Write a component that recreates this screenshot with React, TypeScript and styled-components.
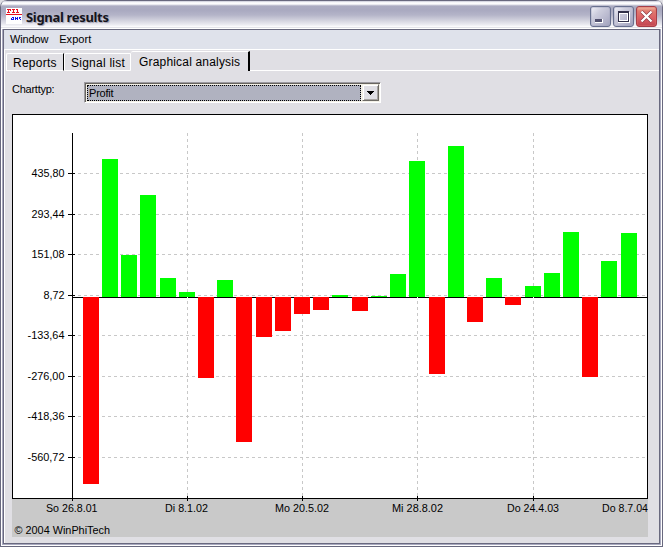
import React from "react";
import styled, { createGlobalStyle } from "styled-components";

const GlobalStyle = createGlobalStyle`
  * { box-sizing: border-box; }
  body { margin: 0; background: #e0dfe4; font-family: "Liberation Sans", Arial, sans-serif; color: #000; }
`;

const Frame = styled.div`
  width: 663px;
  height: 547px;
  display: flex;
  flex-direction: column;
  overflow: hidden;
  background: #e0dfe4;
  border: 1px solid #69697f;
  border-top: 0;
  border-radius: 7px 7px 0 0;
`;

const TitleBar = styled.header`
  height: 29px;
  flex: none;
  display: flex;
  align-items: flex-start;
  padding: 0 5px 0 5px;
  border-radius: 6px 6px 0 0;
  background: linear-gradient(
    #68687e 0, #68687e 1px, #b9bacb 1px, #f4f4f8 2px, #ffffff 4px, #d3d3df 5px,
    #acacc2 6px, #a9a9c0 10px, #b4b4c8 15px, #d0d0dc 20px, #ededf3 25px, #ffffff 27px, #c9c9d5 28px, #9999ac 29px
  );
`;

const AppIcon = styled.svg`
  width: 16px;
  height: 16px;
  margin-top: 8px;
`;

const Title = styled.h1`
  flex: 1;
  margin: 8px 0 0 4px;
  font: bold 13px/18px "Noto Sans", "Open Sans", sans-serif;
  letter-spacing: -0.32px;
  color: #14141c;
  text-shadow: 1px 1px 1px #9c9cb0;
`;

const Controls = styled.div`
  display: flex;
  gap: 2px;
  margin-top: 6px;
`;

const ControlButton = styled.button<{ $close?: boolean }>`
  width: 21px;
  height: 21px;
  padding: 0;
  border: 1px solid ${(p) => (p.$close ? "#a53e48" : "#68708f")};
  border-radius: 3px;
  background: ${(p) =>
    p.$close
      ? "linear-gradient(#f0b8a0 0, #df7b70 4px, #dc5f63 11px, #bf4652 19px)"
      : "linear-gradient(135deg, #f1f1f8 0, #cdcddd 9px, #b8b8ce 18px, #9fa0bb 27px)"};
  box-shadow: inset 0 0 0 1px ${(p) => (p.$close ? "#e0706870" : "#a4a6c070")};
  svg { display: block; width: 19px; height: 19px; }
`;

const Client = styled.div`
  flex: 1;
  display: flex;
  flex-direction: column;
  margin: 0 1px 1px;
  border: 1px solid #a9a9bf;
  border-width: 0 1px 1px;
  outline: 1px solid #fff;
`;

const Inner = styled.main`
  flex: 1;
  display: flex;
  flex-direction: column;
  border: 1px solid #69697f;
  box-shadow: inset 1px 0 #fff;
`;

const MenuBar = styled.nav`
  height: 20px;
  flex: none;
  display: flex;
  gap: 11px;
  padding: 3px 0 0 6px;
  background: #dfe2eb;
  border-bottom: 1px solid #fff;
  font-size: 11px;
  line-height: 13px;
`;

const MenuItem = styled.span<{ $spacing: number }>`
  letter-spacing: ${(p) => p.$spacing}px;
`;

const Tabs = styled.div`
  height: 21px;
  flex: none;
  display: flex;
  align-items: flex-end;
  padding-left: 2px;
`;

const Tab = styled.div<{ $width: number; $active?: boolean; $edge: string; $spacing: number }>`
  width: ${(p) => p.$width}px;
  height: ${(p) => (p.$active ? 20 : 18)}px;
  padding: ${(p) => (p.$active ? "3px 0 0 8px" : "2px 0 0 6px")};
  border-top: 1px solid #fff;
  border-bottom: ${(p) => (p.$active ? 0 : 1)}px solid #fff;
  border-left: ${(p) => (p.$active ? 0 : 1)}px solid #fff;
  border-right: ${(p) => p.$edge};
  border-radius: 2px 0 0 0;
  font-size: 12px;
  line-height: 15px;
  letter-spacing: ${(p) => p.$spacing}px;
  white-space: nowrap;
`;

const TabFill = styled.div`
  flex: 1;
  height: 1px;
  background: #fff;
`;

const Field = styled.div`
  height: 43px;
  flex: none;
  display: flex;
  padding: 11px 0 0 8px;
`;

const FieldLabel = styled.label`
  width: 72px;
  font-size: 11px;
  line-height: 14px;
  letter-spacing: -0.25px;
`;

const Combo = styled.div`
  width: 297px;
  height: 21px;
  display: flex;
  padding: 1px 0 0 1px;
  border: 1px solid #9c9aa0;
  border-right-color: #fff;
  border-bottom-color: #fff;
  background: #f4f1e8;
  box-shadow: inset 1px 1px #696660;
`;

const ComboValue = styled.div`
  flex: 1;
  height: 16px;
  margin: 1px 1px 0 1px;
  padding-left: 1px;
  border: 1px dotted #000;
  background: #b0b2c0;
  font-size: 11px;
  line-height: 15px;
  letter-spacing: -0.2px;
`;

const ComboButton = styled.div`
  width: 17px;
  height: 17px;
  margin-right: 1px;
  border: 1px solid;
  border-color: #f1eee4 #6e6b65 #6e6b65 #f1eee4;
  background: #e0dfe4;
  box-shadow: inset 1px 1px #fff, inset -1px -1px #a6a3a0;
  svg { display: block; width: 15px; height: 15px; }
`;

const ChartBox = styled.svg`
  display: block;
  width: 636px;
  height: 423px;
  margin-left: 8px;
  font-family: "Liberation Sans", Arial, sans-serif;
  font-size: 10px;
`;

const BASE = 297;
const bars: [number, number][] = [
  [83, 484], [102, 159], [121, 255], [140, 195], [160, 278], [179, 292], [198, 378], [217, 280],
  [236, 442], [256, 337], [275, 331], [294, 314], [313, 310], [332, 295], [352, 311], [371, 296],
  [390, 274], [409, 161], [429, 374], [448, 146], [467, 322], [486, 278], [505, 305], [525, 286],
  [544, 273], [563, 232], [582, 377], [601, 261], [621, 233],
];

const yTicks: [number, string, number][] = [
  [173, "435,80", 32], [214, "293,44", 32], [254, "151,08", 32], [295, "8,72", 44],
  [335, "-133,64", 28], [376, "-276,00", 28], [416, "-418,36", 28], [457, "-560,72", 28],
];

const xLabels: [number, string, number][] = [
  [46, "So 26.8.01", 51.5], [165, "Di 8.1.02", 43], [275, "Mo 20.5.02", 54],
  [392, "Mi 28.8.02", 51], [507, "Do 24.4.03", 52], [602, "Do 8.7.04", 46],
];

const xTicks = [187, 302, 417, 533];

function Chart() {
  return (
    <ChartBox viewBox="12 114 636 423" shapeRendering="crispEdges">
      <rect x={12} y={114} width={636} height={423} fill="#c9c9c9" />
      <rect x={12} y={114} width={636} height={385} fill="#000" />
      <rect x={13} y={115} width={634} height={383} fill="#fff" />
      {yTicks.map(([y]) => (
        <line key={y} x1={72} x2={645} y1={y + 0.5} y2={y + 0.5} stroke="#c8c8c8" strokeDasharray="3 3" />
      ))}
      {xTicks.map((x) => (
        <line key={x} x1={x + 0.5} x2={x + 0.5} y1={133} y2={498} stroke="#c8c8c8" strokeDasharray="3 3" />
      ))}
      <rect x={72} y={BASE} width={575} height={1} fill="#000" />
      {bars.map(([x, y]) =>
        y < BASE ? (
          <rect key={x} x={x} y={y} width={16} height={BASE - y} fill="#0f0" />
        ) : (
          <rect key={x} x={x} y={BASE} width={16} height={y - BASE} fill="#f00" />
        )
      )}
      {[187, 417, 533].map((x) => (
        <rect key={x} x={x} y={BASE} width={1} height={1} fill="#fff" />
      ))}
      <rect x={72} y={133} width={1} height={368} fill="#000" />
      {yTicks.map(([y, label, x]) => (
        <g key={label}>
          <rect x={68} y={y} width={7} height={1} fill="#000" />
          <text x={x - 0.5} y={y + 4} textLength={65 - x} lengthAdjust="spacingAndGlyphs">{label}</text>
        </g>
      ))}
      {xTicks.map((x) => (
        <rect key={x} x={x} y={496} width={1} height={5} fill="#000" />
      ))}
      {xLabels.map(([x, label, w]) => (
        <text key={label} x={x} y={512} textLength={w} lengthAdjust="spacingAndGlyphs">{label}</text>
      ))}
      <text x={14.5} y={534} textLength={95.5} lengthAdjust="spacingAndGlyphs">© 2004 WinPhiTech</text>
    </ChartBox>
  );
}

export default function App() {
  return (
    <>
      <GlobalStyle />
      <Frame>
        <TitleBar>
          <AppIcon viewBox="0 0 16 16" shapeRendering="crispEdges">
            <path d="M0 0h16v16H0z" fill="#fff" />
            <path d="M0 6h16v1H0zM1 1h4v1H1zM2 2h1v2H2zM1 4h3v1H1zM6 1h3v1H6zM7 2h1v2H7zM6 4h3v1H6zM10 1h2v1h-2zM11 2h1v2h-1zM10 4h3v1h-3zM4 2h1v1H4z" fill="#e81020" />
            <path d="M6 9h2v1H6zM5 10h1v2H5zM7 10h1v1H7zM9 9h1v3H9zM10 10h1v1h-1zM11 9h1v3h-1zM13 9h2v1h-2zM13 10h1v1h-1zM14 11h1v1h-1zM6 11h2v1H6z" fill="#1018f0" />
          </AppIcon>
          <Title>Signal results</Title>
          <Controls>
            <ControlButton aria-label="Minimize">
              <svg viewBox="0 0 19 19" shapeRendering="crispEdges">
                <path d="M4 12h8v4H4z" fill="#fff" /><path d="M4 12h7v3H4z" fill="#51506e" />
              </svg>
            </ControlButton>
            <ControlButton aria-label="Maximize">
              <svg viewBox="0 0 19 19" shapeRendering="crispEdges">
                <path d="M4.5 5.5h11v10h-11z" fill="none" stroke="#fff" />
                <path d="M4.5 5.5h10v9h-10z" fill="none" stroke="#302f48" />
                <path d="M4 4h11v2H4z" fill="#302f48" />
                <path d="M5.5 6.5h8v7h-8z" fill="none" stroke="#fff" />
              </svg>
            </ControlButton>
            <ControlButton $close aria-label="Close">
              <svg viewBox="0 0 19 19">
                <path d="M4.5 4.5l10 10M14.5 4.5l-10 10" stroke="#842f3d" strokeWidth="3.4" />
                <path d="M4.5 4.5l10 10M14.5 4.5l-10 10" stroke="#fff" strokeWidth="2.4" />
              </svg>
            </ControlButton>
          </Controls>
        </TitleBar>
        <Client>
          <Inner>
            <MenuBar>
              <MenuItem $spacing={-0.15}>Window</MenuItem>
              <MenuItem $spacing={0.05}>Export</MenuItem>
            </MenuBar>
            <Tabs>
              <Tab $width={58} $edge="1px solid #000" $spacing={0.25}>Reports</Tab>
              <Tab $width={67} $edge="1px solid #fff" $spacing={0.25}>Signal list</Tab>
              <Tab $active $width={119} $edge="2px solid #000" $spacing={0.18}>Graphical analysis</Tab>
              <TabFill />
            </Tabs>
            <Field>
              <FieldLabel>Charttyp:</FieldLabel>
              <Combo>
                <ComboValue>Profit</ComboValue>
                <ComboButton>
                  <svg viewBox="0 0 15 15" shapeRendering="crispEdges">
                    <path d="M4 6h7v1H4zM5 7h5v1H5zM6 8h3v1H6zM7 9h1v1H7z" />
                  </svg>
                </ComboButton>
              </Combo>
            </Field>
            <Chart />
          </Inner>
        </Client>
      </Frame>
    </>
  );
}
